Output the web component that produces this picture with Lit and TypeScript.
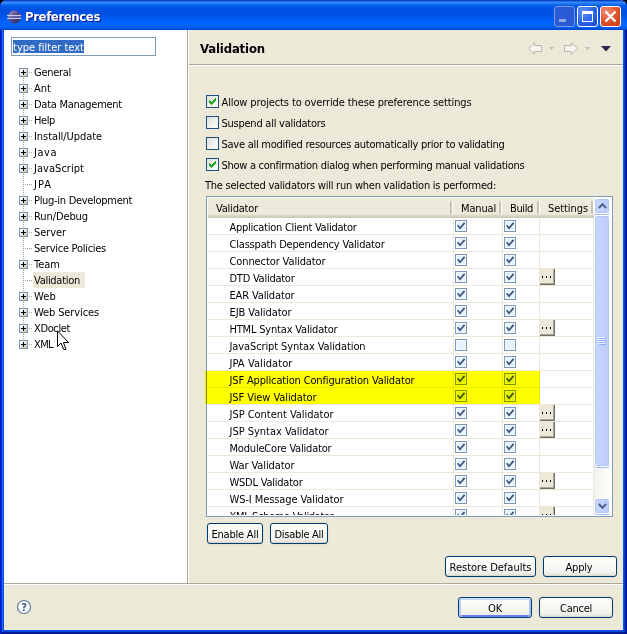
import { LitElement, html, css, svg, nothing } from "lit";
import { customElement, property } from "lit/decorators.js";
import { classMap } from "lit/directives/class-map.js";

const TREE: [string, number, boolean][] = [
  ["General", 37, true], ["Ant", 17, true], ["Data Management", 88, true], ["Help", 21, true],
  ["Install/Update", 68, true], ["Java", 23, true], ["JavaScript", 50, true], ["JPA", 18, false],
  ["Plug-in Development", 98, true], ["Run/Debug", 54, true], ["Server", 32, true],
  ["Service Policies", 72, false], ["Team", 26, true], ["Validation", 46, false],
  ["Web", 22, true], ["Web Services", 65, true], ["XDoclet", 36, true], ["XML", 19, true],
];

const OPTIONS: [string, number, boolean][] = [
  ["Allow projects to override these preference settings", 250, true],
  ["Suspend all validators", 104, false],
  ["Save all modified resources automatically prior to validating", 283, false],
  ["Show a confirmation dialog when performing manual validations", 303, true],
];

interface Validator { name: string; w: number; off?: boolean; settings?: boolean }
const VALIDATORS: Validator[] = [
  { name: "Application Client Validator", w: 127 },
  { name: "Classpath Dependency Validator", w: 155 },
  { name: "Connector Validator", w: 96 },
  { name: "DTD Validator", w: 65, settings: true },
  { name: "EAR Validator", w: 65 },
  { name: "EJB Validator", w: 62 },
  { name: "HTML Syntax Validator", w: 108, settings: true },
  { name: "JavaScript Syntax Validation", w: 136, off: true },
  { name: "JPA Validator", w: 63 },
  { name: "JSF Application Configuration Validator", w: 185 },
  { name: "JSF View Validator", w: 87 },
  { name: "JSP Content Validator", w: 104, settings: true },
  { name: "JSP Syntax Validator", w: 99, settings: true },
  { name: "ModuleCore Validator", w: 102 },
  { name: "War Validator", w: 65 },
  { name: "WSDL Validator", w: 73, settings: true },
  { name: "WS-I Message Validator", w: 114 },
  { name: "XML Schema Validator", w: 104, settings: true },
];

/** One line of text whose tracking is adjusted to a given width. */
@customElement("ui-label")
class UiLabel extends LitElement {
  @property() text = "";
  @property({ type: Number }) w = 0;
  static styles = css`
    :host { display: inline-block; white-space: pre; flex: none; margin: 1px 0 -1px; }
    span { display: inline-block; }
  `;
  updated() {
    const s = this.renderRoot.querySelector("span") as HTMLElement;
    s.style.letterSpacing = "0";
    const natural = s.getBoundingClientRect().width;
    if (this.w) {
      s.style.letterSpacing = `${(this.w - natural) / this.text.length}px`;
      this.style.width = `${this.w}px`;
    }
  }
  render() { return html`<span>${this.text}</span>`; }
}

const label = (text: string, w: number) => html`<ui-label .text=${text} .w=${w}></ui-label>`;

const treeLines = (expandable: boolean, first: boolean, last: boolean) => html`
  <svg class="lines" width="14" height="16" shape-rendering="crispEdges">
    ${svg`<path d="M4.5 ${first ? 8 : 0}V${last ? 8 : 16}M4 8.5H14" stroke="#a5a292" stroke-dasharray="1 1" fill="none"/>`}
    ${expandable ? svg`
      <rect x="0" y="4" width="9" height="9" fill="#7898b5"/>
      <rect x="1" y="5" width="7" height="7" fill="url(#pg)"/>
      <path d="M2 8.5H7M4.5 6V11" stroke="#000"/>
      <linearGradient id="pg" x2="1" y2="1"><stop offset=".2" stop-color="#fff"/><stop offset="1" stop-color="#c6beae"/></linearGradient>
      <rect x="9" y="8" width="1" height="1" fill="#fff"/>` : nothing}
  </svg>`;

const optionBox = (on: boolean) => html`
  <svg width="13" height="13" shape-rendering="crispEdges">
    <linearGradient id="cg" x2="1" y2="1"><stop stop-color="#dcdcd7"/><stop offset="1" stop-color="#fff"/></linearGradient>
    <rect x=".5" y=".5" width="12" height="12" fill="url(#cg)" stroke="#1c5180"/>
    ${on ? svg`<path d="M3 5h1v1h1v1h1v-1h1v-1h1v-1h1v-1h1v3h-1v1h-1v1h-1v1h-1v1h-1v-1h-1v-1h-1z" fill="#21a121"/>` : nothing}
  </svg>`;

const cellBox = (on: boolean) => html`
  <svg width="12" height="12">
    <rect x=".5" y=".5" width="11" height="11" fill="#f1faff" stroke="#8096b4"/>
    <rect x="2" y="2" width="8" height="8" fill="#e2f3fd"/>
    ${on ? svg`<path d="M2.7 5.3L5 8.2L9.6 2.9" stroke="#405078" stroke-width="1.7" fill="none"/>` : nothing}
  </svg>`;

@customElement("app-root")
class AppRoot extends LitElement {
  static styles = css`
    :host {
      display: block; width: 627px; height: 634px; background: #000; overflow: hidden;
      font: 11px/16px "DejaVu Sans Condensed", "DejaVu Sans", sans-serif; color: #000; cursor: default;
    }
    * { box-sizing: border-box; }
    svg { display: block; flex: none; }
    .window {
      position: relative; height: 634px; display: flex; flex-direction: column; padding: 0 4px 4px;
      background: #ece9d8; border-radius: 7px 7px 0 0; overflow: hidden;
      box-shadow: inset 1px 0 #0019cf, inset -1px -1px #00138c, inset 2px 0 #0831d9, inset -2px -2px #001ea0,
        inset 3px 0 #166aee, inset -3px -3px #0441d8, inset 4px 0 #0855dd, inset -4px -4px #0855f0;
    }
    .title {
      flex: none; height: 30px; margin: 0 -4px; padding: 3px 6px 0 7px; display: flex; align-items: center;
      background: linear-gradient(#0842c8 0, #0842c8 1px, #3a94ff 2px, #2a80f8 3px, #0058e6 6px, #0050e0 11px, #0054e8 15px, #0264fc 22px, #0066ff 26px, #005bf4 28px, #0040c8 30px);
    }
    .title ui-label {
      font: bold 13px/18px "DejaVu Sans Condensed", "DejaVu Sans", sans-serif; color: #fff;
      text-shadow: 1px 1px #0f1089; margin: 1px auto 0 3px;
    }
    .controls { display: flex; gap: 2px; margin-top: -1px; }
    .body { height: 553px; display: flex; }
    .nav { width: 184px; background: #fff; border-right: 1px solid #aca899; padding: 7px 0 0 7px; }
    .filter { width: 145px; height: 19px; border: 1px solid #7f9db9; padding: 2px 1px; }
    .filter div { width: 71px; height: 13px; line-height: 13px; background: #316ac5; color: #fff; }
    .tree { padding: 8px 0 0 8px; }
    .node { height: 16px; display: flex; }
    .name { height: 16px; padding: 0 5px 0 1px; }
    .name.selected { background: #ece9d8; }
    .main { flex: 1; border-left: 1px solid #fff; display: flex; flex-direction: column; }
    .head {
      height: 35px; border-bottom: 1px solid #aca899; box-shadow: 0 1px #fff; padding: 2px 12px 0 11px;
      display: flex; align-items: center; justify-content: space-between;
      font: bold 13px/18px "DejaVu Sans Condensed", "DejaVu Sans", sans-serif;
    }
    .options { padding: 30px 0 0 17px; display: flex; flex-direction: column; gap: 8px; }
    .option { height: 13px; display: flex; align-items: center; gap: 2.5px; }
    .caption { margin: 6px 0 3px 16px; height: 16px; }
    .table { width: 407px; height: 321px; margin-left: 17px; border: 1px solid #7f9db9; background: #fff; padding: 1px; display: flex; position: relative; }
    .grid { width: 387px; height: 317px; overflow: hidden; }
    .row { display: grid; grid-template-columns: 246px 49px 37px 54px; }
    .cols {
      display: grid; height: 20px; grid-template-columns: 245px 49px 38px 54px;
      background: linear-gradient(#ebeadb 16px, #e2decd 17px, #d6d2c2 18px, #cbc7b8 20px);
    }
    .col { padding: 2px 0 0 8px; position: relative; }
    .col::after { content: ""; position: absolute; right: 0; top: 3px; width: 2px; height: 13px; background: #c7c5b2; border-right: 1px solid #fff; }
    .row { height: 17px; }
    .cell { border-right: 1px solid #ece9d8; border-bottom: 1px solid #ece9d8; height: 17px; padding: 2px 0 0 1px; }
    .cell.first { padding: 1px 0 0 21.5px; }
    .cell.last { padding: 0; }
    .more {
      width: 15px; height: 16px; background: #ece9d8; box-shadow: inset -1px -1px #716f64, inset -2px -2px #aca899;
      display: flex; gap: 2px; padding: 7px 0 0 2px;
    }
    .more i { width: 1px; height: 2px; background: #000; margin-right: 1px; }
    .marker { position: absolute; left: -2px; top: 174px; width: 335px; height: 33px; background: #ff0; mix-blend-mode: multiply; }
    .scroll { width: 17px; display: flex; flex-direction: column; background: linear-gradient(90deg, #f3f1ec, #fefefb); }
    .arrow, .thumb { width: 16px; border: 1px solid #fff; border-radius: 3px; background: linear-gradient(90deg, #c9d7fd, #bccbfa); box-shadow: inset 0 0 0 1px #b3c6f8, 0 1px #a5bbee; }
    .arrow { height: 16px; display: grid; place-items: center; }
    .thumb { height: 252px; margin: 1px 0 31px; display: grid; place-items: center; }
    .pair { display: flex; gap: 7px; padding: 6px 0 0 18px; }
    .btn {
      height: 21px; border: 1px solid #003c74; border-radius: 3px; display: flex; justify-content: center; align-items: center;
      background: linear-gradient(#fff, #f3f3ee 75%, #ebeae2 90%, #d8d0c4); box-shadow: 0 0 0 1px #e6e2d2;
    }
    .btn.default { box-shadow: inset 0 1px #cee7ff, inset 0 2px #bcd4f6, inset 2px 0 #b8cdf5, inset -2px 0 #a8c0f0, inset 0 -2px #6982ee; }
    .apply { display: flex; justify-content: flex-end; gap: 7px; padding: 12px 6px 0 0; }
    .apply .b74 { padding-right: 2px; }
    .b56 { width: 56px; } .b58 { width: 58px; } .b91 { width: 91px; } .b74 { width: 74px; }
    .foot { flex: 1; border-top: 1px solid #aca899; box-shadow: inset 0 1px #fff; display: flex; align-items: flex-start; gap: 7px; padding: 13px 10px 0 12px; }
    .help { margin: 2px auto 0 0; }
    .pointer { position: absolute; left: 57px; top: 330px; }
  `;

  controls() {
    return html`<div class="controls">
      <svg width="21" height="21"><defs>
        <radialGradient id="blue" cx=".3" cy=".25" r="1"><stop stop-color="#5c8df4"/><stop offset=".6" stop-color="#2458e0"/><stop offset="1" stop-color="#1848c8"/></radialGradient></defs>
        <rect x=".5" y=".5" width="20" height="20" rx="2.5" fill="#2b5ad5" stroke="#7898e8"/>
        <rect x="5" y="13" width="7" height="3" fill="#8fa8ea"/></svg>
      <svg width="21" height="21"><defs>
        <radialGradient id="blue2" cx=".3" cy=".25" r="1"><stop stop-color="#5c8df4"/><stop offset=".6" stop-color="#2860e8"/><stop offset="1" stop-color="#1848c8"/></radialGradient></defs>
        <rect x=".5" y=".5" width="20" height="20" rx="2.5" fill="url(#blue2)" stroke="#fff"/>
        <path d="M5 5h11v11H5zM6 8v7h9V8z" fill="#fff" fill-rule="evenodd"/></svg>
      <svg width="21" height="21"><radialGradient id="red" cx=".3" cy=".25" r="1"><stop stop-color="#ef8e72"/><stop offset=".5" stop-color="#e0562e"/><stop offset="1" stop-color="#c8380c"/></radialGradient>
        <rect x=".5" y=".5" width="20" height="20" rx="2.5" fill="url(#red)" stroke="#fff"/>
        <path d="M5.5 5.5L15.5 15.5M15.5 5.5L5.5 15.5" stroke="#fff" stroke-width="2.4"/></svg>
    </div>`;
  }

  render() {
    return html`<div class="window">
      <div class="title">
        <svg width="15" height="14" viewBox="0 0 15 14"><linearGradient id="ec" x2="1" y2="1"><stop stop-color="#b8a0b8"/><stop offset=".45" stop-color="#5a4a90"/><stop offset="1" stop-color="#282058"/></linearGradient>
          <circle cx="7.5" cy="7" r="6.5" fill="url(#ec)"/>
          <path d="M0 5.5H14M0 8.5H14" stroke="#c8cce8"/><path d="M1 7H14" stroke="#7080b8"/></svg>
        ${label("Preferences", 75)}
        ${this.controls()}
      </div>
      <div class="body">
        <div class="nav">
          <div class="filter"><div>${label("type filter text", 71)}</div></div>
          <div class="tree">
            ${TREE.map(([name, w, exp], i) => html`<div class="node">
              ${treeLines(exp, i === 0, i === TREE.length - 1)}
              <div class=${classMap({ name: true, selected: name === "Validation" })}>${label(name, w)}</div>
            </div>`)}
          </div>
        </div>
        <div class="main">
          <div class="head">
            ${label("Validation", 65)}
            <svg width="83" height="13" viewBox="0 0 83 13">
              <path d="M.7 6.5L6.5 .8V3.5H13.5V9.5H6.5V12.2Z" fill="#f6f5f0" stroke="#b9b7ae"/>
              <path d="M21 5h5l-2.5 3z" fill="#bdbbb2"/>
              <path d="M49.3 6.5L43.5 .8V3.5H36.5V9.5H43.5V12.2Z" fill="#f6f5f0" stroke="#b9b7ae"/>
              <path d="M57 5h5l-2.5 3z" fill="#bdbbb2"/>
              <path d="M73 4h10l-5 5.5z" fill="#2c2750"/>
            </svg>
          </div>
          <div class="options">
            ${OPTIONS.map(([t, w, on]) => html`<div class="option">${optionBox(on)}${label(t, w)}</div>`)}
          </div>
          <div class="caption">${label("The selected validators will run when validation is performed:", 291)}</div>
          <div class="table">
            <div class="grid">
              <div class="cols">
                <div class="col">${label("Validator", 42)}</div><div class="col">${label("Manual", 35)}</div>
                <div class="col">${label("Build", 23)}</div><div class="col">${label("Settings", 40)}</div>
              </div>
              ${VALIDATORS.map((v) => html`<div class="row">
                <div class="cell first">${label(v.name, v.w)}</div>
                <div class="cell">${cellBox(!v.off)}</div>
                <div class="cell">${cellBox(!v.off)}</div>
                <div class="cell last">${v.settings ? html`<div class="more"><i></i><i></i><i></i></div>` : nothing}</div>
              </div>`)}
            </div>
            <div class="scroll">
              <div class="arrow"><svg width="9" height="6"><path d="M.8 5L4.5 1.3L8.2 5" stroke="#4d6185" stroke-width="2" fill="none"/></svg></div>
              <div class="thumb"><svg width="8" height="8" shape-rendering="crispEdges"><path d="M0 .5H7M0 2.5H7M0 4.5H7M0 6.5H7" stroke="#eef4fe"/><path d="M1 1.5H8M1 3.5H8M1 5.5H8M1 7.5H8" stroke="#8cb0f8"/></svg></div>
              <div class="arrow"><svg width="9" height="6"><path d="M.8 1L4.5 4.7L8.2 1" stroke="#4d6185" stroke-width="2" fill="none"/></svg></div>
            </div>
            <div class="marker"></div>
          </div>
          <div class="pair">
            <div class="btn b56">${label("Enable All", 47)}</div>
            <div class="btn b58">${label("Disable All", 49)}</div>
          </div>
          <div class="apply">
            <div class="btn b91">${label("Restore Defaults", 82)}</div>
            <div class="btn b74">${label("Apply", 27)}</div>
          </div>
        </div>
      </div>
      <div class="foot">
        <svg class="help" width="16" height="16"><circle cx="8" cy="8" r="6.5" fill="#fafbfd" stroke="#63799c" stroke-width="1.2"/>
          <text x="8" y="12" text-anchor="middle" font-size="11" font-weight="bold" fill="#4a5f88">?</text></svg>
        <div class="btn b74 default">${label("OK", 14)}</div>
        <div class="btn b74">${label("Cancel", 32)}</div>
      </div>
      <svg class="pointer" width="13" height="21"><path d="M.5 .8V16.5L4 13L6.7 19.5H9L6.5 12.5H11.5Z" fill="#fff" stroke="#000"/></svg>
    </div>`;
  }
}
